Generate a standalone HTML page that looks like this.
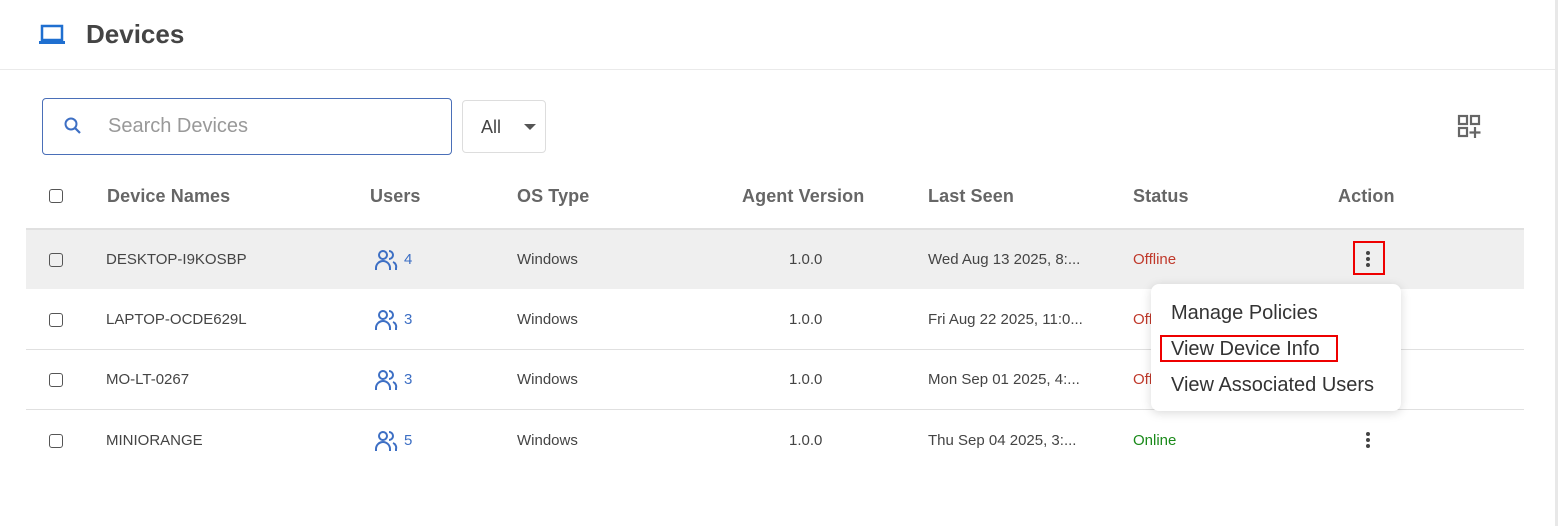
<!DOCTYPE html>
<html><head><meta charset="utf-8"><style>
*{box-sizing:border-box;margin:0;padding:0}
body{width:1558px;height:526px;background:#fff;font-family:"Liberation Sans",sans-serif;position:relative;overflow:hidden;color:#444}
.a{position:absolute}
.hdr{font-weight:bold;color:#666;font-size:18px;letter-spacing:.1px}
.cb{width:14px;height:14px;border:1.5px solid #555;border-radius:3px;position:absolute;left:49px}
.t{font-size:15px;color:#444;position:absolute}
.u{color:#3d6fc4;font-size:15px;position:absolute;left:373px}
.dots{position:absolute;left:1366px;width:5px}
.dots i{display:block;width:4px;height:4px;border-radius:50%;background:#444;margin-bottom:2px}
.m{position:absolute;left:1171px;font-size:20px;color:#333}
</style></head><body>
<svg class="a" style="left:39px;top:24px" width="26" height="22" viewBox="0 0 26 22"><rect x="3" y="2" width="20" height="14" fill="none" stroke="#1f6fd0" stroke-width="2.5"/><rect x="0" y="17" width="26" height="3" fill="#1f6fd0"/></svg>
<div class="a" style="left:86px;top:19px;font-size:26px;font-weight:bold;color:#444">Devices</div>
<div class="a" style="left:0;top:69px;width:1556px;height:1px;background:#eaeaea"></div>
<div class="a" style="left:1555px;top:0;width:3px;height:526px;background:#e8e8e8"></div>
<div class="a" style="left:42px;top:98px;width:410px;height:57px;border:1px solid #4a6fb8;border-radius:4px"></div>
<svg class="a" style="left:63px;top:116px" width="20" height="20" viewBox="0 0 20 20"><circle cx="8" cy="8" r="5.5" fill="none" stroke="#3d6fc4" stroke-width="2"/><line x1="12" y1="12" x2="17" y2="17" stroke="#3d6fc4" stroke-width="2.2"/></svg>
<div class="a" style="left:108px;top:115px;font-size:20px;color:#999">Search Devices</div>
<div class="a" style="left:462px;top:100px;width:84px;height:53px;border:1px solid #ddd;border-radius:4px"></div>
<div class="a" style="left:481px;top:117px;font-size:18px;color:#444">All</div>
<div class="a" style="left:524px;top:124px;width:0;height:0;border-left:6px solid transparent;border-right:6px solid transparent;border-top:6px solid #555"></div>
<svg class="a" style="left:1457px;top:114px" width="26" height="26" viewBox="0 0 26 26" fill="none" stroke="#666" stroke-width="2.2"><rect x="2" y="2" width="8" height="8"/><rect x="14" y="2" width="8" height="8"/><rect x="2" y="14" width="8" height="8"/><path d="M18 13v11M12.5 18.5h11"/></svg>
<div class="cb" style="top:189px"></div>
<div class="a hdr" style="left:107px;top:186px">Device Names</div>
<div class="a hdr" style="left:370px;top:186px">Users</div>
<div class="a hdr" style="left:517px;top:186px">OS Type</div>
<div class="a hdr" style="left:742px;top:186px">Agent Version</div>
<div class="a hdr" style="left:928px;top:186px">Last Seen</div>
<div class="a hdr" style="left:1133px;top:186px">Status</div>
<div class="a hdr" style="left:1338px;top:186px">Action</div>
<div class="a" style="left:26px;top:228px;width:1498px;height:2px;background:#e0e0e0"></div>
<div class="a" style="left:26px;top:230px;width:1498px;height:59px;background:#efefef"></div>
<div class="a" style="left:26px;top:349px;width:1498px;height:1px;background:#e0e0e0"></div>
<div class="a" style="left:26px;top:409px;width:1498px;height:1px;background:#e0e0e0"></div>
<svg width="0" height="0"><defs><symbol id="us" viewBox="0 0 24 22"><circle cx="9" cy="6" r="4" fill="none" stroke="#3d6fc4" stroke-width="2"/><path d="M2 21v-2a6 6 0 0 1 14 0v2M15 2a4 4 0 0 1 0 8M19 13a5 5 0 0 1 3 6v2" fill="none" stroke="#3d6fc4" stroke-width="2"/></symbol></defs></svg>
<div class="cb" style="top:253px"></div><div class="t" style="left:106px;top:251px">DESKTOP-I9KOSBP</div>
<svg class="a" style="left:374px;top:249px" width="24" height="22"><use href="#us"/></svg><div class="u" style="left:404px;top:251px">4</div>
<div class="t" style="left:517px;top:251px">Windows</div><div class="t" style="left:789px;top:251px">1.0.0</div>
<div class="t" style="left:928px;top:251px">Wed Aug 13 2025, 8:...</div><div class="t" style="left:1133px;top:251px;color:#c0392b">Offline</div>
<div class="a" style="left:1353px;top:241px;width:32px;height:34px;border:2px solid #e00"></div>
<div class="dots" style="top:251px"><i></i><i></i><i></i></div>

<div class="cb" style="top:313px"></div><div class="t" style="left:106px;top:311px">LAPTOP-OCDE629L</div>
<svg class="a" style="left:374px;top:309px" width="24" height="22"><use href="#us"/></svg><div class="u" style="left:404px;top:311px">3</div>
<div class="t" style="left:517px;top:311px">Windows</div><div class="t" style="left:789px;top:311px">1.0.0</div>
<div class="t" style="left:928px;top:311px">Fri Aug 22 2025, 11:0...</div><div class="t" style="left:1133px;top:311px;color:#c0392b">Offline</div>

<div class="cb" style="top:373px"></div><div class="t" style="left:106px;top:371px">MO-LT-0267</div>
<svg class="a" style="left:374px;top:369px" width="24" height="22"><use href="#us"/></svg><div class="u" style="left:404px;top:371px">3</div>
<div class="t" style="left:517px;top:371px">Windows</div><div class="t" style="left:789px;top:371px">1.0.0</div>
<div class="t" style="left:928px;top:371px">Mon Sep 01 2025, 4:...</div><div class="t" style="left:1133px;top:371px;color:#c0392b">Offline</div>

<div class="cb" style="top:434px"></div><div class="t" style="left:106px;top:432px">MINIORANGE</div>
<svg class="a" style="left:374px;top:430px" width="24" height="22"><use href="#us"/></svg><div class="u" style="left:404px;top:432px">5</div>
<div class="t" style="left:517px;top:432px">Windows</div><div class="t" style="left:789px;top:432px">1.0.0</div>
<div class="t" style="left:928px;top:432px">Thu Sep 04 2025, 3:...</div><div class="t" style="left:1133px;top:432px;color:#1a8a1a">Online</div>
<div class="dots" style="top:432px"><i></i><i></i><i></i></div>

<div class="a" style="left:1151px;top:284px;width:250px;height:127px;background:#fff;border-radius:8px;box-shadow:0 2px 10px rgba(0,0,0,.15)"></div>
<div class="m" style="top:302px">Manage Policies</div>
<div class="m" style="top:338px">View Device Info</div>
<div class="a" style="left:1160px;top:335px;width:178px;height:27px;border:2px solid #e00"></div>
<div class="m" style="top:374px">View Associated Users</div>
</body></html>
